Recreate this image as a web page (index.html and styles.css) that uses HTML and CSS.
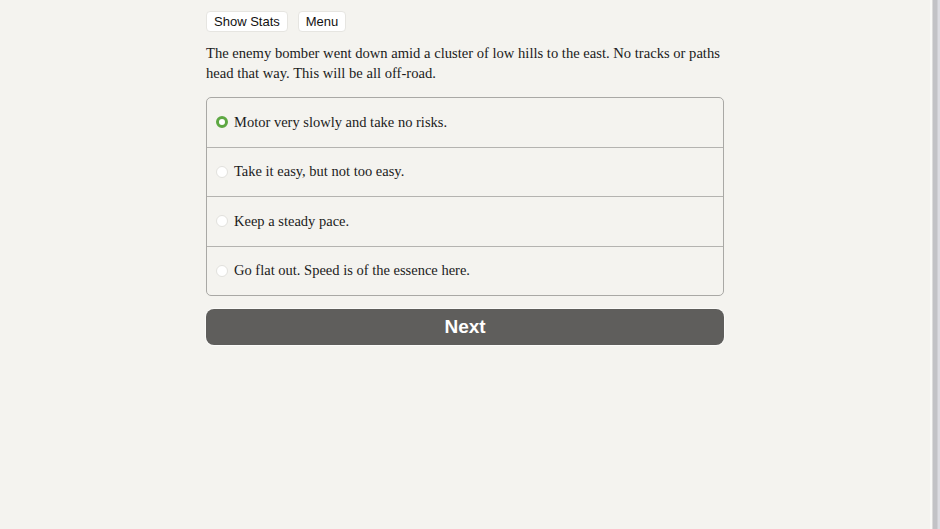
FILE: index.html
```html
<!DOCTYPE html>
<html lang="en">
<head>
  <meta charset="UTF-8">
  <meta name="viewport" content="width=device-width, initial-scale=1.0">
  <title>Bomber Down</title>
  <link rel="stylesheet" href="styles.css">
</head>
<body>
  <div class="page">
    <div class="container">
      <div class="top-buttons">
        <button class="spacedLink">Show Stats</button>
        <button class="spacedLink">Menu</button>
      </div>

      <p class="story">The enemy bomber went down amid a cluster of low hills to the east. No tracks or paths head that way. This will be all off-road.</p>

      <form class="choice">
        <label class="option">
          <input type="radio" name="choice" value="0" checked>
          <span>Motor very slowly and take no risks.</span>
        </label>
        <label class="option">
          <input type="radio" name="choice" value="1">
          <span>Take it easy, but not too easy.</span>
        </label>
        <label class="option">
          <input type="radio" name="choice" value="2">
          <span>Keep a steady pace.</span>
        </label>
        <label class="option">
          <input type="radio" name="choice" value="3">
          <span>Go flat out. Speed is of the essence here.</span>
        </label>
      </form>

      <button class="next">Next</button>
    </div>
  </div>
  <div class="scrollbar"></div>
</body>
</html>
```

FILE: styles.css
```css
html, body {
  height: 100%;
}

body {
  margin: 0;
  display: flex;
  background-color: #f4f3ef;
  font-family: "Liberation Serif", "Times New Roman", serif;
  color: #1b1b1b;
}

.page {
  flex: 1;
}

.container {
  width: 518px;
  margin: 0 auto;
  padding-top: 11px;
}

.top-buttons {
  display: flex;
  gap: 10px;
}

.spacedLink {
  font-family: "Liberation Sans", Arial, sans-serif;
  font-size: 13px;
  color: #111;
  background-color: #fff;
  border: 1px solid #e6e5e1;
  border-radius: 4px;
  height: 21px;
  padding: 0 7px;
  cursor: pointer;
}

.story {
  font-size: 14.6px;
  line-height: 20px;
  margin: 11px 0 14px;
}

.choice {
  border: 1px solid #a9a8a5;
  border-radius: 5px;
  overflow: hidden;
}

.option {
  display: flex;
  align-items: center;
  height: 48.5px;
  padding-left: 8px;
  font-size: 14.5px;
  border-top: 1px solid #b4b3b0;
  cursor: pointer;
}

.option:first-child {
  border-top: none;
}

.option input {
  appearance: none;
  width: 12px;
  height: 12px;
  margin: 0 6px 0 1px;
  border-radius: 50%;
  background: #fff;
  border: 1px solid #e2e1dd;
}

.option input:checked {
  background: #fff;
  border: 3px solid #5ea843;
}

.next {
  display: block;
  width: 100%;
  height: 36px;
  margin-top: 13px;
  font-family: "Liberation Sans", Arial, sans-serif;
  font-size: 19px;
  font-weight: bold;
  color: #fff;
  background-color: #5f5e5c;
  border: none;
  border-radius: 8px;
  box-shadow: 0 0 0 1px #fbfbf9;
  cursor: pointer;
}

.scrollbar {
  width: 10px;
  background: linear-gradient(to right, #f4f3ef 0, #fff 1px, #f4f3ef 2px, #c2c2c6 3px, #c2c2c6 7px, #dcdce2 8px);
}
```
